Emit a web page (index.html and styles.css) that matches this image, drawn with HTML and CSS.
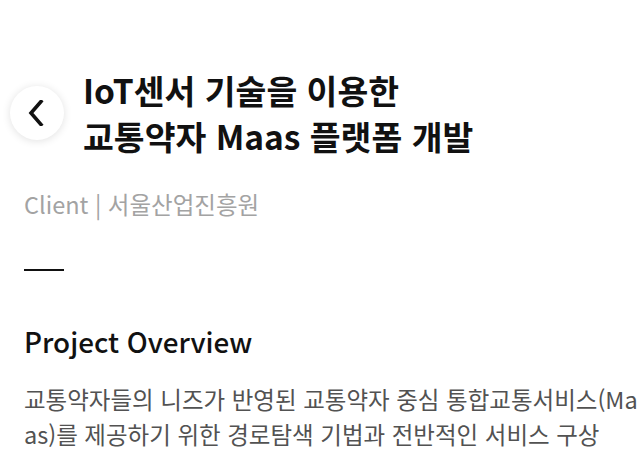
FILE: index.html
```html
<!DOCTYPE html>
<html lang="ko">
<head>
<meta charset="utf-8">
<link rel="stylesheet" href="styles.css">
</head>
<body>
<div class="page">
  <header class="head">
    <button class="back" aria-label="back">
      <svg width="18" height="26" viewBox="0 0 18 26"><path d="M14 1.5 L4 13 L14 24.5" fill="none" stroke="#111" stroke-width="3.6" stroke-linecap="square"/></svg>
    </button>
    <h1 class="title">IoT센서 기술을 이용한<br>교통약자 Maas 플랫폼 개발</h1>
  </header>
  <p class="client">Client | 서울산업진흥원</p>
  <div class="rule"></div>
  <h2 class="sec">Project Overview</h2>
  <p class="desc">교통약자들의 니즈가 반영된 교통약자 중심 통합교통서비스(Maas)를 제공하기 위한 경로탐색 기법과 전반적인 서비스 구상</p>
</div>
</body>
</html>
```
FILE: styles.css
```css
html, body { margin: 0; padding: 0; background: #fff; }
body { font-family: "Noto Sans CJK KR", "Noto Sans", sans-serif; color: #111; }
.page { padding: 67px 0 0 24px; width: 620px; }
.head { display: flex; align-items: center; gap: 19px; margin-left: -14px; }
.back {
  width: 54px; height: 54px; border-radius: 50%; border: 0; background: #fff;
  box-shadow: 0 1px 8px rgba(0,0,0,0.12);
  display: flex; align-items: center; justify-content: center; padding: 0 2px 0 0; flex: none;
}
.title { margin: 0; font-size: 33.5px; font-weight: 700; line-height: 46px; }
.client { margin: 29px 0 0; font-size: 23.5px; color: #a3a3a3; line-height: 32px; }
.rule { width: 40px; height: 2px; background: #111; margin-top: 49px; }
.sec { margin: 50px 0 0; font-size: 27.8px; font-weight: 500; line-height: 40px; }
.desc { margin: 21px 0 0; font-size: 23.5px; color: #525252; line-height: 35px; word-break: break-all; }
```
